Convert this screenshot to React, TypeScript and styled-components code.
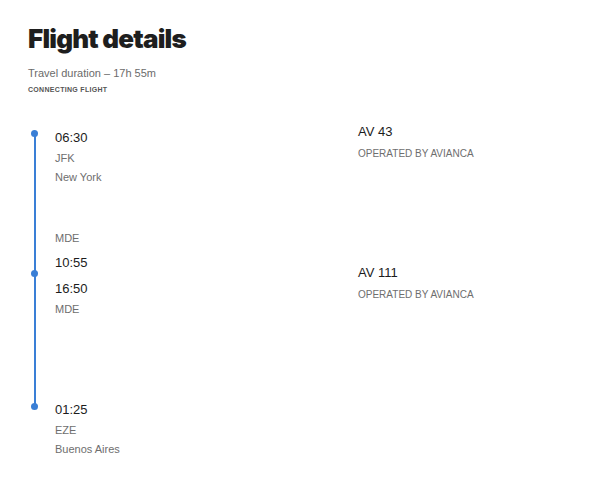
import React from "react";
import styled, { createGlobalStyle } from "styled-components";

const GlobalStyle = createGlobalStyle`
  body {
    margin: 0;
    background: #ffffff;
    font-family: "Liberation Sans", Arial, sans-serif;
    color: #1c1c1c;
  }
`;

const Page = styled.div`
  padding: 22px 28px 0 28px;
`;

const Title = styled.h1`
  margin: 0;
  font-family: "Inter", "Liberation Sans", sans-serif;
  font-weight: 900;
  font-size: 26px;
  line-height: 34px;
  letter-spacing: -0.8px;
  color: #1e1e1e;
`;

const Duration = styled.div`
  margin-top: 10px;
  font-size: 11px;
  line-height: 14px;
  color: #6b6b6b;
`;

const Tag = styled.div`
  margin-top: 5px;
  font-size: 7px;
  line-height: 10px;
  font-weight: 700;
  letter-spacing: 0.3px;
  color: #555555;
  text-transform: uppercase;
`;

const Timeline = styled.div`
  position: relative;
  margin-top: 32px;
  padding-left: 27px;
  display: flex;
  flex-direction: column;

  &::before {
    content: "";
    position: absolute;
    left: 6px;
    top: 6px;
    bottom: 52px;
    width: 2px;
    background: #3a7fd6;
  }
`;

const Segment = styled.div<{ $gap?: number }>`
  display: grid;
  grid-template-columns: 303px 1fr;
  margin-top: ${(p) => p.$gap ?? 0}px;
`;

const Stop = styled.div<{ $dot?: number; $pad?: number; $gap?: number }>`
  position: relative;
  display: flex;
  flex-direction: column;
  padding-top: ${(p) => p.$pad ?? 0}px;
  margin-top: ${(p) => p.$gap ?? 0}px;

  &::before {
    content: "";
    display: ${(p) => (p.$dot === undefined ? "none" : "block")};
    position: absolute;
    left: -24px;
    top: ${(p) => (p.$dot ?? 0) - 3.5}px;
    width: 7px;
    height: 7px;
    border-radius: 50%;
    background: #3a7fd6;
  }
`;

const Time = styled.div<{ $gap?: number }>`
  margin-top: ${(p) => p.$gap ?? 0}px;
  padding-top: 1px;
  font-size: 13px;
  line-height: 20px;
  color: #1c1c1c;
`;

const Place = styled.div<{ $h?: number }>`
  font-size: 11px;
  line-height: ${(p) => p.$h ?? 20}px;
  color: #6e6e6e;
`;

const Flight = styled.div<{ $shift: number }>`
  display: flex;
  flex-direction: column;
  margin-top: ${(p) => p.$shift}px;
`;

const FlightNo = styled.div`
  font-size: 13px;
  line-height: 18px;
  color: #1c1c1c;
`;

const Operator = styled.div`
  margin-top: 5px;
  font-size: 10px;
  line-height: 16px;
  color: #6e6e6e;
  text-transform: uppercase;
`;

export default function App() {
  return (
    <Page>
      <GlobalStyle />
      <Title>Flight details</Title>
      <Duration>Travel duration – 17h 55m</Duration>
      <Tag>Connecting flight</Tag>
      <Timeline>
        <Segment>
          <div>
            <Stop $dot={6}>
              <Time>06:30</Time>
              <Place>JFK</Place>
              <Place $h={19}>New York</Place>
            </Stop>
            <Stop $gap={41}>
              <Place>MDE</Place>
              <Time $gap={4}>10:55</Time>
            </Stop>
          </div>
          <Flight $shift={-4}>
            <FlightNo>AV 43</FlightNo>
            <Operator>Operated by Avianca</Operator>
          </Flight>
        </Segment>
        <Segment>
          <div>
            <Stop $dot={0} $pad={5}>
              <Time>16:50</Time>
              <Place>MDE</Place>
            </Stop>
          </div>
          <Flight $shift={-9}>
            <FlightNo>AV 111</FlightNo>
            <Operator>Operated by Avianca</Operator>
          </Flight>
        </Segment>
        <Segment $gap={80}>
          <Stop $dot={7}>
            <Time>01:25</Time>
            <Place>EZE</Place>
            <Place $h={19}>Buenos Aires</Place>
          </Stop>
        </Segment>
      </Timeline>
    </Page>
  );
}
